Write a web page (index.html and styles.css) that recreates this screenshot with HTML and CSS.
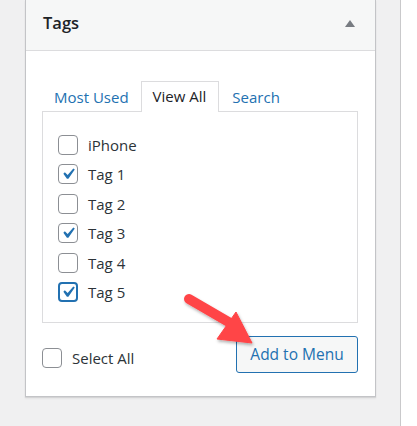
FILE: index.html
```html
<!DOCTYPE html>
<html>
<head>
<meta charset="utf-8">
<link rel="stylesheet" href="styles.css">
</head>
<body>
<div class="page">
  <div class="column">
    <div class="panel">
      <div class="panel-head">
        <h2 class="panel-title">Tags</h2>
        <span class="toggle"></span>
      </div>
      <div class="panel-body">
        <ul class="tabs">
          <li class="tab">Most Used</li>
          <li class="tab active">View All</li>
          <li class="tab">Search</li>
        </ul>
        <div class="tab-box">
          <label class="item"><span class="cb"></span><span>iPhone</span></label>
          <label class="item"><span class="cb"><svg viewBox="0 0 20 20"><path d="M14.83 4.89l1.34.94-5.81 8.38H9.02L5.78 9.67l1.34-1.25 2.57 2.4z"/></svg></span><span>Tag 1</span></label>
          <label class="item"><span class="cb"></span><span>Tag 2</span></label>
          <label class="item"><span class="cb"><svg viewBox="0 0 20 20"><path d="M14.83 4.89l1.34.94-5.81 8.38H9.02L5.78 9.67l1.34-1.25 2.57 2.4z"/></svg></span><span>Tag 3</span></label>
          <label class="item"><span class="cb"></span><span>Tag 4</span></label>
          <label class="item"><span class="cb focus"><svg viewBox="0 0 20 20"><path d="M14.83 4.89l1.34.94-5.81 8.38H9.02L5.78 9.67l1.34-1.25 2.57 2.4z"/></svg></span><span>Tag 5</span></label>
        </div>
        <div class="actions">
          <label class="item select-all"><span class="cb"></span><span>Select All</span></label>
          <button class="btn">Add to Menu</button>
        </div>
      </div>
    </div>
  </div>
  <svg class="arrow" width="417" height="426" viewBox="0 0 417 426">
    <defs>
      <filter id="sh" x="-20%" y="-20%" width="140%" height="140%">
        <feDropShadow dx="1" dy="2" stdDeviation="1.5" flood-color="#000" flood-opacity="0.3"/>
      </filter>
    </defs>
    <g filter="url(#sh)" fill="#ff4447" stroke="#ff4447">
      <line x1="189" y1="299" x2="232" y2="324" stroke-width="10" stroke-linecap="round"/>
      <polygon points="236,312 217,339 252,343" stroke-width="1" stroke-linejoin="round"/>
    </g>
  </svg>
</div>
</body>
</html>
```
FILE: styles.css
```css
* { box-sizing: border-box; }
html, body { margin: 0; padding: 0; }
body {
  background: #ffffff;
  font-family: "Open Sans", "Noto Sans", sans-serif;
  color: #1d2327;
  width: 417px;
  height: 426px;
  overflow: hidden;
}
.page {
  position: relative;
  width: 417px;
  height: 426px;
}
.column {
  width: 401px;
  height: 426px;
  background: #f0f0f1;
  border-right: 1px solid #c9c9cb;
  padding-left: 25px;
}
.panel {
  width: 351px;
  height: 397px;
  background: #fff;
  border: 1px solid #c3c4c7;
  border-top: none;
  box-shadow: 0 1px 1px rgba(0,0,0,0.08), 0 2px 2px rgba(0,0,0,0.04);
  display: flex;
  flex-direction: column;
}
.panel-head {
  height: 51px;
  background: #f6f7f7;
  border-bottom: 1px solid #dcdcde;
  display: flex;
  align-items: center;
  justify-content: space-between;
  padding: 0 20px 0 17px;
}
.panel-title {
  margin: 0;
  font-size: 16.5px;
  font-weight: 600;
  color: #1d2327;
  line-height: 1;
  padding-bottom: 3px;
}
.toggle {
  width: 0;
  height: 0;
  border-left: 5px solid transparent;
  border-right: 5px solid transparent;
  border-bottom: 7px solid #787c82;
  margin-bottom: 4px;
}
.panel-body {
  padding: 30px 17px 0 16px;
  flex: 1;
}
.tabs {
  list-style: none;
  margin: 0;
  padding: 0;
  display: flex;
  height: 30px;
  position: relative;
  z-index: 1;
}
.tab {
  height: 30px;
  padding: 4px 12px 0 12px;
  font-size: 15px;
  line-height: 22px;
  color: #2271b1;
  border: 1px solid transparent;
  border-bottom: none;
}
.tab:first-child { padding-left: 11px; padding-right: 11px; }
.tab.active {
  color: #1d2327;
  background: #fff;
  border-color: #dcdcde;
  height: 31px;
  padding: 3px 12px 0 11px;
}
.tab.active + .tab { padding-left: 12px; }
.tab-box {
  border: 1px solid #dcdcde;
  height: 212px;
  padding: 23px 15px 0 15px;
  display: flex;
  flex-direction: column;
  gap: 9.4px;
}
.item {
  display: flex;
  align-items: center;
  gap: 10px;
  font-size: 15px;
  color: #2c3338;
  height: 20px;
}
.cb {
  width: 20px;
  height: 20px;
  border: 1px solid #8c8f94;
  border-radius: 4px;
  background: #fff;
  display: flex;
  align-items: center;
  justify-content: center;
  flex: none;
}
.cb svg {
  width: 22px;
  height: 22px;
  fill: #2271b1;
  flex: none;
}
.cb.focus {
  border: 2px solid #2271b1;
}
.actions {
  display: flex;
  align-items: flex-start;
  justify-content: space-between;
  padding-top: 13px;
}
.select-all {
  margin-top: 12px;
}
.btn {
  width: 122px;
  height: 37px;
  background: #f6f7f7;
  border: 1px solid #2271b1;
  border-radius: 3px;
  color: #2271b1;
  font-family: "Open Sans", "Noto Sans", sans-serif;
  font-size: 15.5px;
  padding: 0 0 1px 0;
}
.arrow {
  position: absolute;
  left: 0;
  top: 0;
  pointer-events: none;
}
```
